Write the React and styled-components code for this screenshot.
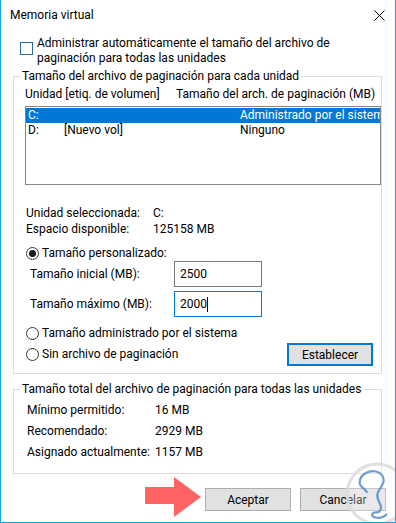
import React from "react";
import styled, { createGlobalStyle } from "styled-components";

const GlobalStyle = createGlobalStyle`
  html, body { margin: 0; padding: 0; background: #fff; }
  body {
    font-family: Roboto, "Liberation Sans", sans-serif;
    font-size: 12px;
    color: #000;
  }
  * { box-sizing: border-box; }
`;

const Window = styled.div`
  position: relative;
  width: 396px;
  height: 523px;
  border: 1px solid #12a3f0;
  border-top: none;
  overflow: hidden;
  display: flex;
  flex-direction: column;
  background: #fff;
`;

const TitleBar = styled.div`
  height: 30px;
  display: flex;
  align-items: center;
  justify-content: space-between;
  padding: 0 10px 0 9px;
  line-height: 15px;
`;

const Body = styled.div`
  padding: 0 13px 0 12px;
  display: flex;
  flex-direction: column;
`;

const CheckRow = styled.div`
  display: flex;
  align-items: flex-start;
  gap: 4px;
  margin: 6px 0 0 7px;
  line-height: 15px;
  white-space: nowrap;
`;

const CheckBox = styled.span`
  flex: none;
  width: 13px;
  height: 13px;
  margin-top: 6px;
  border: 1px solid #2a6a9e;
  background: #fff;
`;

const Group = styled.fieldset`
  margin: ${(p) => p.$top}px 0 0;
  padding: 0;
  border: 1px solid #dcdcdc;
  min-width: 0;
`;

const Legend = styled.legend`
  margin-left: 6px;
  padding: 0 2px;
  line-height: 15px;
  white-space: nowrap;
`;

const GroupBody = styled.div`
  display: flex;
  flex-direction: column;
  padding: 0 0 ${(p) => p.$bottom}px ${(p) => p.$left}px;
`;

const HeaderRow = styled.div`
  display: grid;
  grid-template-columns: 151px auto;
  margin-top: 3px;
  line-height: 15px;
  white-space: nowrap;
`;

const ListBox = styled.div`
  margin-top: 4px;
  height: 79px;
  border: 1px solid #828790;
  padding: 1px 0;
  overflow: hidden;
`;

const ListRow = styled.div`
  display: grid;
  grid-template-columns: 36px 176px 1fr;
  height: 15px;
  line-height: 15px;
  padding-left: 2px;
  white-space: nowrap;
  overflow: hidden;
  background: ${(p) => (p.$selected ? "#0078d7" : "transparent")};
  color: ${(p) => (p.$selected ? "#fff" : "#000")};
`;

const InfoGrid = styled.div`
  display: grid;
  grid-template-columns: ${(p) => p.$col}px auto;
  margin: ${(p) => p.$top}px 0 0 ${(p) => p.$left}px;
  line-height: ${(p) => p.$lh}px;
  white-space: nowrap;
`;

const RadioRow = styled.label`
  display: flex;
  align-items: center;
  gap: 3px;
  margin: ${(p) => p.$top || 0}px 0 0 1px;
  line-height: 15px;
  white-space: nowrap;
`;

const Radio = styled.span`
  flex: none;
  width: 13px;
  height: 13px;
  border-radius: 50%;
  border: 1px solid #333;
  background: #fff;
  display: flex;
  align-items: center;
  justify-content: center;
  &::after {
    content: "";
    width: 7px;
    height: 7px;
    border-radius: 50%;
    background: ${(p) => (p.$checked ? "#1a1a1a" : "transparent")};
  }
`;

const InputRow = styled.div`
  display: grid;
  grid-template-columns: 144px 88px;
  align-items: center;
  margin: ${(p) => p.$top}px 0 0 5px;
  white-space: nowrap;
`;

const TextBox = styled.div`
  height: 26px;
  border: 1px solid ${(p) => (p.$focused ? "#0078d7" : "#7a7a7a")};
  padding-left: 5px;
  display: flex;
  align-items: center;
  background: #fff;
`;

const Caret = styled.span`
  width: 1px;
  height: 15px;
  background: #000;
`;

const BottomRow = styled.div`
  display: flex;
  align-items: center;
  justify-content: space-between;
  margin-top: 2px;
  padding-right: 8px;
`;

const Button = styled.button`
  width: 86px;
  height: 23px;
  padding: 0;
  font: inherit;
  color: #000;
  background: #e1e1e1;
  border: ${(p) => (p.$default ? "2px solid #0078d7" : "1px solid #adadad")};
`;

const ButtonBar = styled.div`
  display: flex;
  justify-content: flex-end;
  gap: 9px;
  margin-top: 14px;
  padding-right: 9px;
`;

const ArrowOverlay = styled.svg`
  position: absolute;
  left: 143px;
  top: 476px;
`;

const Watermark = styled.svg`
  position: absolute;
  left: 338px;
  top: 459px;
  opacity: 0.85;
`;

export default function App() {
  return (
    <>
      <GlobalStyle />
      <Window>
        <TitleBar>
          <span>Memoria virtual</span>
          <svg width="11" height="11" viewBox="0 0 11 11">
            <path d="M0.5 0.5 L10.5 10.5 M10.5 0.5 L0.5 10.5" stroke="#000" strokeWidth="1" fill="none" />
          </svg>
        </TitleBar>
        <Body>
          <CheckRow>
            <CheckBox />
            <span>
              Administrar automáticamente el tamaño del archivo de
              <br />
              paginación para todas las unidades
            </span>
          </CheckRow>

          <Group $top={3}>
            <Legend>Tamaño del archivo de paginación para cada unidad</Legend>
            <GroupBody $left={11} $bottom={7}>
              <HeaderRow>
                <span>Unidad [etiq. de volumen]</span>
                <span>Tamaño del arch. de paginación (MB)</span>
              </HeaderRow>
              <ListBox>
                <ListRow $selected>
                  <span>C:</span>
                  <span></span>
                  <span>Administrado por el sistema</span>
                </ListRow>
                <ListRow>
                  <span>D:</span>
                  <span>[Nuevo vol]</span>
                  <span>Ninguno</span>
                </ListRow>
              </ListBox>

              <InfoGrid $col={127} $top={20} $left={1} $lh={16}>
                <span>Unidad seleccionada:</span>
                <span>C:</span>
                <span>Espacio disponible:</span>
                <span>125158 MB</span>
              </InfoGrid>

              <RadioRow $top={9}>
                <Radio $checked />
                <span>Tamaño personalizado:</span>
              </RadioRow>
              <InputRow $top={0}>
                <span>Tamaño inicial (MB):</span>
                <TextBox>2500</TextBox>
              </InputRow>
              <InputRow $top={4}>
                <span>Tamaño máximo (MB):</span>
                <TextBox $focused>
                  2000
                  <Caret />
                </TextBox>
              </InputRow>
              <RadioRow $top={9}>
                <Radio />
                <span>Tamaño administrado por el sistema</span>
              </RadioRow>
              <BottomRow>
                <RadioRow>
                  <Radio />
                  <span>Sin archivo de paginación</span>
                </RadioRow>
                <Button $default>Establecer</Button>
              </BottomRow>
            </GroupBody>
          </Group>

          <Group $top={8}>
            <Legend>Tamaño total del archivo de paginación para todas las unidades</Legend>
            <GroupBody $left={13} $bottom={10}>
              <InfoGrid $col={128} $top={3} $left={0} $lh={21}>
                <span>Mínimo permitido:</span>
                <span>16 MB</span>
                <span>Recomendado:</span>
                <span>2929 MB</span>
                <span>Asignado actualmente:</span>
                <span>1157 MB</span>
              </InfoGrid>
            </GroupBody>
          </Group>
        </Body>

        <ButtonBar>
          <Button>Aceptar</Button>
          <Button>Cancelar</Button>
        </ButtonBar>

        <ArrowOverlay width="58" height="43" viewBox="0 0 58 43">
          <polygon points="1,11 30,11 30,1 57,21 30,41 30,28 1,28" fill="#ff6464" />
        </ArrowOverlay>

        <Watermark width="72" height="72" viewBox="0 0 70 70">
          <circle cx="37" cy="34" r="29" fill="rgba(255,255,255,0.35)" stroke="#dcdcdc" strokeWidth="3" />
          <path
            d="M20 24 C20 12 36 8 42 16 C46 22 40 28 38 32 C36 36 38 40 40 44 C42 48 40 52 36 52 C32 52 30 56 36 57 C40 58 44 56 46 54 M27 32 C24 28 22 28 20 24"
            fill="none"
            stroke="#5b8fcc"
            strokeWidth="2.2"
            strokeLinecap="round"
          />
        </Watermark>
      </Window>
    </>
  );
}
